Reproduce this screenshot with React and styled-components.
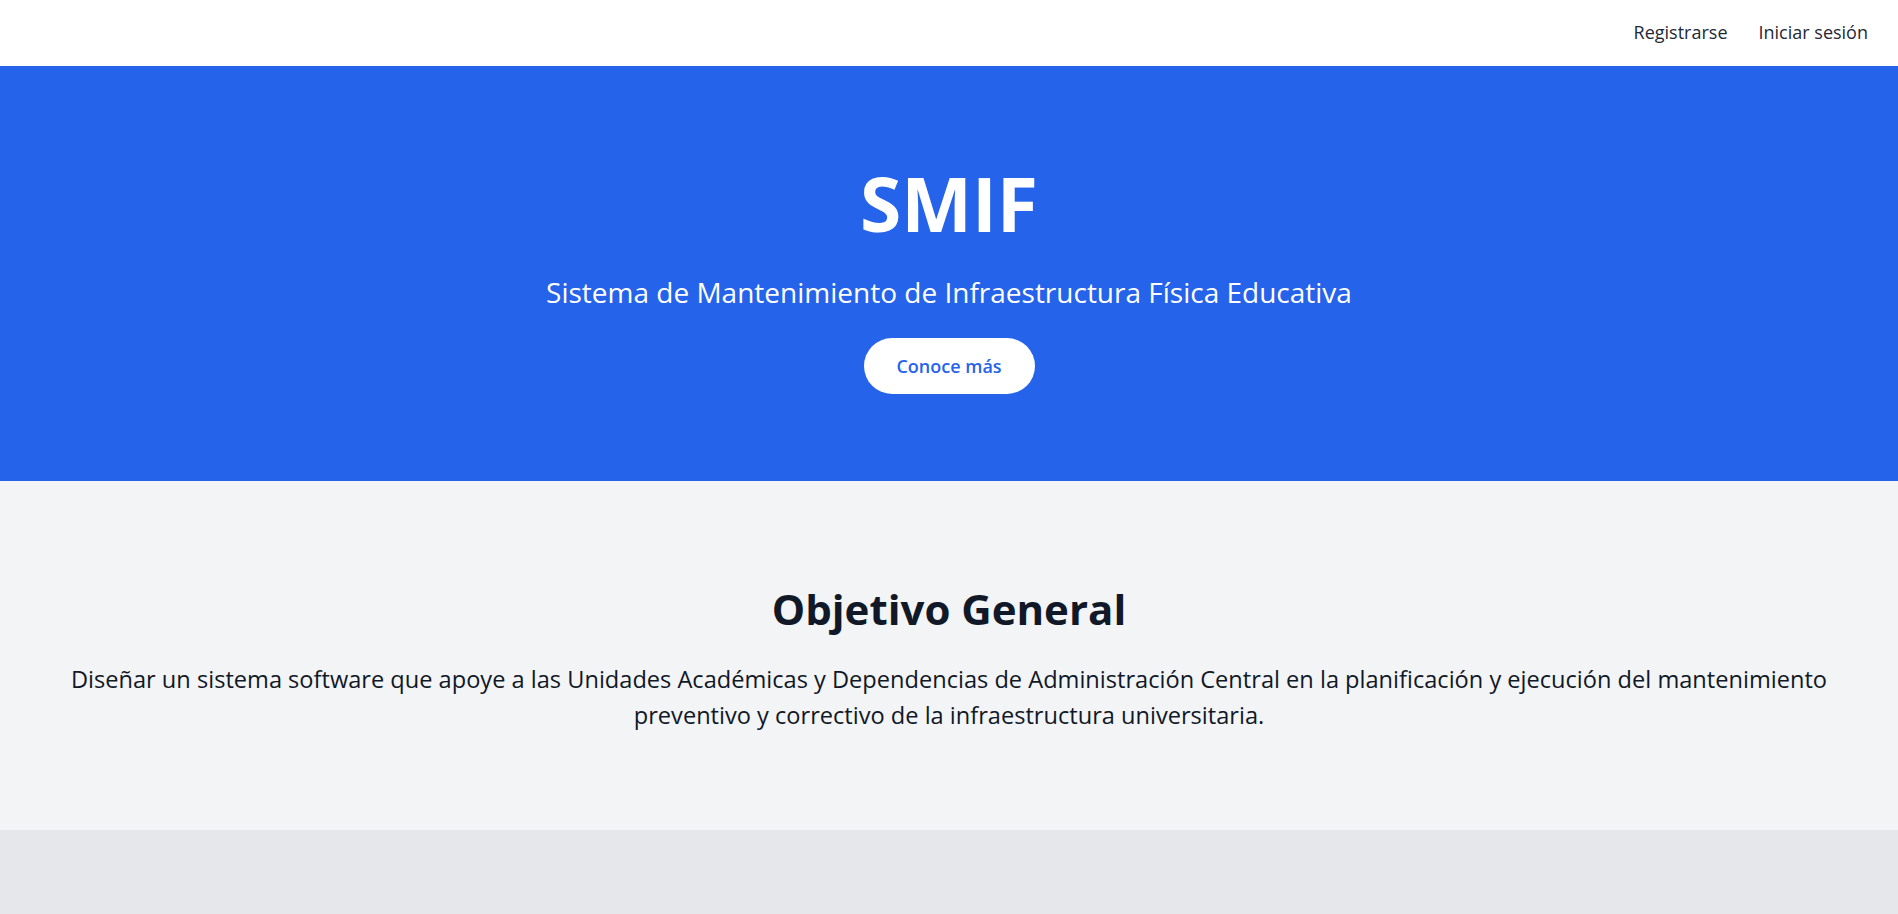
import styled, { createGlobalStyle } from "styled-components";

const GlobalStyle = createGlobalStyle`
  * { box-sizing: border-box; }
  body {
    margin: 0;
    font-family: "Open Sans", "Noto Sans", sans-serif;
    background: #e5e7eb;
  }
`;

const App = () => {
  return (
    <>
      <GlobalStyle />
      <Nav>
        <NavLink href="#">Registrarse</NavLink>
        <NavLink href="#">Iniciar sesión</NavLink>
      </Nav>

      <Hero>
        <Title>SMIF</Title>
        <Subtitle>Sistema de Mantenimiento de Infraestructura Física Educativa</Subtitle>
        <HeroButton type="button">Conoce más</HeroButton>
      </Hero>

      <Objective>
        <Heading>Objetivo General</Heading>
        <Text>
          Diseñar un sistema software que apoye a las Unidades Académicas y
          Dependencias de Administración Central en la planificación y ejecución
          del mantenimiento preventivo y correctivo de la infraestructura
          universitaria.
        </Text>
      </Objective>

      <Footer />
    </>
  );
};
export default App;

const Nav = styled.nav`
  height: 66px;
  background: #fff;
  display: flex;
  align-items: center;
  justify-content: flex-end;
  gap: 31px;
  padding: 0 30px 2px;
`;

const NavLink = styled.a`
  font-size: 18px;
  color: #1f2937;
  text-decoration: none;
`;

const Hero = styled.section`
  height: 415px;
  background: #2563eb;
  color: #fff;
  display: flex;
  flex-direction: column;
  align-items: center;
  padding-top: 100px;
`;

const Title = styled.h1`
  margin: 0;
  font-size: 75px;
  line-height: 1;
  font-weight: 700;
`;

const Subtitle = styled.p`
  margin: 35px 0 0;
  font-size: 28px;
  line-height: 32px;
`;

const HeroButton = styled.button`
  margin-top: 30px;
  width: 171px;
  height: 56px;
  border: none;
  border-radius: 28px;
  background: #fff;
  color: #2563eb;
  font-family: inherit;
  font-size: 18px;
  font-weight: 600;
`;

const Objective = styled.section`
  height: 349px;
  background: #f3f4f6;
  display: flex;
  flex-direction: column;
  align-items: center;
  padding: 104px 52px 0;
  text-align: center;
`;

const Heading = styled.h2`
  margin: 0;
  font-size: 42px;
  line-height: 48px;
  font-weight: 700;
  color: #111827;
`;

const Text = styled.p`
  margin: 28px 0 0;
  font-size: 23.6px;
  line-height: 36px;
  color: #111827;
`;

const Footer = styled.footer`
  height: 84px;
  background: #e5e7eb;
`;
